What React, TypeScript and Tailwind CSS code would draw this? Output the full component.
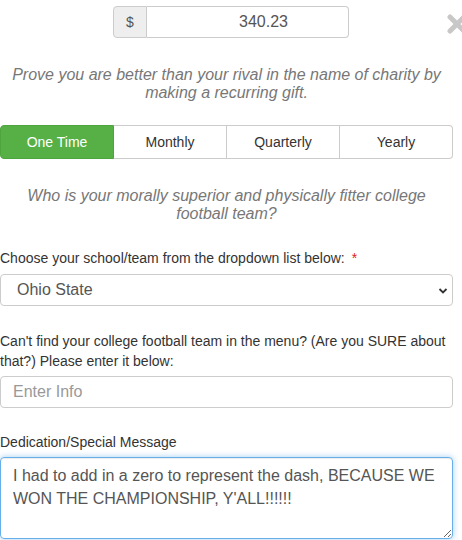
import React from "react";

export default function App() {
  const periods = ["One Time", "Monthly", "Quarterly", "Yearly"];
  return (
    <div className="relative w-[462px] h-[540px] overflow-hidden bg-white font-['Liberation_Sans',Arial,sans-serif] text-[#333]">
      <svg
        className="absolute left-[447px] top-[14px]"
        width="20"
        height="20"
        viewBox="0 0 20 20"
      >
        <path d="M3 3 L17 17 M17 3 L3 17" stroke="#c8c8c8" strokeWidth="5" strokeLinecap="round" />
      </svg>

      <div className="flex justify-center pt-[6px] w-[462px]">
        <div className="flex h-[32px]">
          <div className="w-[34px] h-[32px] flex items-center justify-center bg-[#eeeeee] border border-[#cccccc] rounded-l-[4px] text-[14px] text-[#555]">
            $
          </div>
          <input
            readOnly
            value="340.23"
            className="w-[202px] h-[32px] border border-l-0 border-[#cccccc] rounded-r-[4px] pl-[32px] text-center text-[16px] text-[#555] outline-none"
          />
        </div>
      </div>

      <div className="w-[453px]">
        <p className="mt-[28px] text-center italic text-[16px] leading-[18px] text-[#777] px-[8px]">
          Prove you are better than your rival in the name of charity by making a recurring gift.
        </p>

        <div className="mt-[23px] flex h-[34px]">
          {periods.map((p, i) => (
            <div
              key={p}
              className={
                i === 0
                  ? "flex-1 flex items-center justify-center bg-[#57b046] border border-[#4ea53e] text-white text-[14px] rounded-l-[4px]"
                  : i === 3
                  ? "flex-1 flex items-center justify-center bg-white border border-l-0 border-[#cccccc] text-[#333] text-[14px] rounded-r-[4px]"
                  : "flex-1 flex items-center justify-center bg-white border border-l-0 border-[#cccccc] text-[#333] text-[14px]"
              }
            >
              {p}
            </div>
          ))}
        </div>

        <p className="mt-[28px] text-center italic text-[16px] leading-[18px] text-[#777] px-[20px]">
          Who is your morally superior and physically fitter college football team?
        </p>

        <div className="mt-[25px] text-[14px] leading-[20px] text-[#333]">
          Choose your school/team from the dropdown list below: <span className="text-[#e02020] ml-[3px]">*</span>
        </div>
        <div className="relative mt-[6px] h-[32px] border border-[#cccccc] rounded-[4px] flex items-center pl-[16px] text-[16px] text-[#555]">
          Ohio State
          <svg className="absolute right-[4px] top-[12px]" width="10" height="8" viewBox="0 0 10 8">
            <path d="M1.5 2 L5 5.5 L8.5 2" stroke="#333" strokeWidth="1.8" fill="none" />
          </svg>
        </div>

        <div className="mt-[25px] text-[14px] leading-[20px] text-[#333]">
          Can't find your college football team in the menu? (Are you SURE about that?) Please enter it below:
        </div>
        <input
          placeholder="Enter Info"
          className="mt-[5px] block w-full h-[32px] border border-[#cccccc] rounded-[4px] px-[12px] text-[16px] text-[#555] placeholder:text-[#999] outline-none"
        />

        <div className="mt-[24px] text-[14px] leading-[20px] text-[#333]">Dedication/Special Message</div>
        <textarea
          readOnly
          value="I had to add in a zero to represent the dash, BECAUSE WE WON THE CHAMPIONSHIP, Y'ALL!!!!!!"
          className="mt-[5px] block w-full h-[82px] border border-[#66afe9] rounded-[4px] px-[12px] pt-[6px] text-[16px] leading-[23px] text-[#555] outline-none shadow-[inset_0_1px_1px_rgba(0,0,0,0.075),0_0_6px_rgba(102,175,233,0.6)]"
        />
      </div>
    </div>
  );
}
